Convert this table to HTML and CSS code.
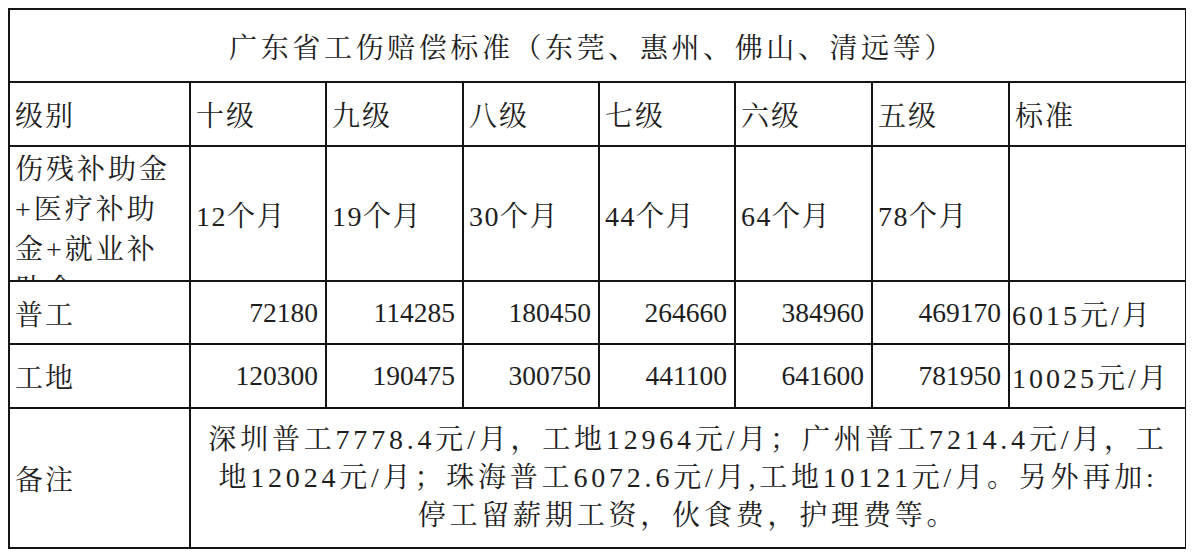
FILE: index.html
```html
<!DOCTYPE html>
<html lang="zh-CN">
<head>
<meta charset="utf-8">
<title>广东省工伤赔偿标准</title>
<link rel="stylesheet" href="styles.css">
</head>
<body>
<div class="sheet">
  <div class="cell title">广东省工伤赔偿标准（东莞、惠州、佛山、清远等）</div>

  <div class="cell head">级别</div>
  <div class="cell head">十级</div>
  <div class="cell head">九级</div>
  <div class="cell head">八级</div>
  <div class="cell head">七级</div>
  <div class="cell head">六级</div>
  <div class="cell head">五级</div>
  <div class="cell head">标准</div>

  <div class="cell label">伤残补助金<br>+医疗补助<br>金+就业补<br>助金</div>
  <div class="cell months">12个月</div>
  <div class="cell months">19个月</div>
  <div class="cell months">30个月</div>
  <div class="cell months">44个月</div>
  <div class="cell months">64个月</div>
  <div class="cell months">78个月</div>
  <div class="cell"></div>

  <div class="cell head">普工</div>
  <div class="cell num">72180</div>
  <div class="cell num">114285</div>
  <div class="cell num">180450</div>
  <div class="cell num">264660</div>
  <div class="cell num">384960</div>
  <div class="cell num">469170</div>
  <div class="cell std">6015元/月</div>

  <div class="cell head">工地</div>
  <div class="cell num">120300</div>
  <div class="cell num">190475</div>
  <div class="cell num">300750</div>
  <div class="cell num">441100</div>
  <div class="cell num">641600</div>
  <div class="cell num">781950</div>
  <div class="cell std">10025元/月</div>

  <div class="cell head">备注</div>
  <div class="cell note">深圳普工7778.4元/月，工地12964元/月；广州普工7214.4元/月，工<br>地12024元/月；珠海普工6072.6元/月,工地10121元/月。另外再加:<br>停工留薪期工资，伙食费，护理费等。</div>
</div>
</body>
</html>
```

FILE: styles.css
```css
html, body {
  background: #ffffff;
}

body {
  margin: 8px;
  font-family: "Liberation Serif", "Noto Serif CJK SC", "Noto Sans CJK SC", serif;
  font-size: 28px;
  color: #1e1e1e;
}

.sheet {
  display: grid;
  grid-template-columns: 179px 134px 135px 134px 134px 135px 135px 175px;
  grid-template-rows: 71px 62px 133px 61px 62px 138px;
  gap: 2px;
  padding: 2px;
  background: #141414;
  width: max-content;
}

.cell {
  background: #ffffff;
  display: flex;
  align-items: center;
  overflow: hidden;
  white-space: nowrap;
}

.title {
  grid-column: 1 / -1;
  justify-content: center;
  letter-spacing: 3.6px;
  padding-right: 10px;
}

.head {
  padding-left: 5px;
  letter-spacing: 2px;
}

.label {
  align-items: flex-start;
  padding: 3px 0 0 5px;
  line-height: 40px;
  letter-spacing: 3px;
}

.months {
  padding-left: 5px;
  letter-spacing: 1.5px;
}

.num {
  justify-content: flex-end;
  padding-right: 7px;
  font-size: 27.5px;
}

.std {
  padding-left: 2px;
  letter-spacing: 3px;
}

.note {
  grid-column: 2 / -1;
  justify-content: center;
  text-align: center;
  line-height: 38px;
  letter-spacing: 3.8px;
}
```
